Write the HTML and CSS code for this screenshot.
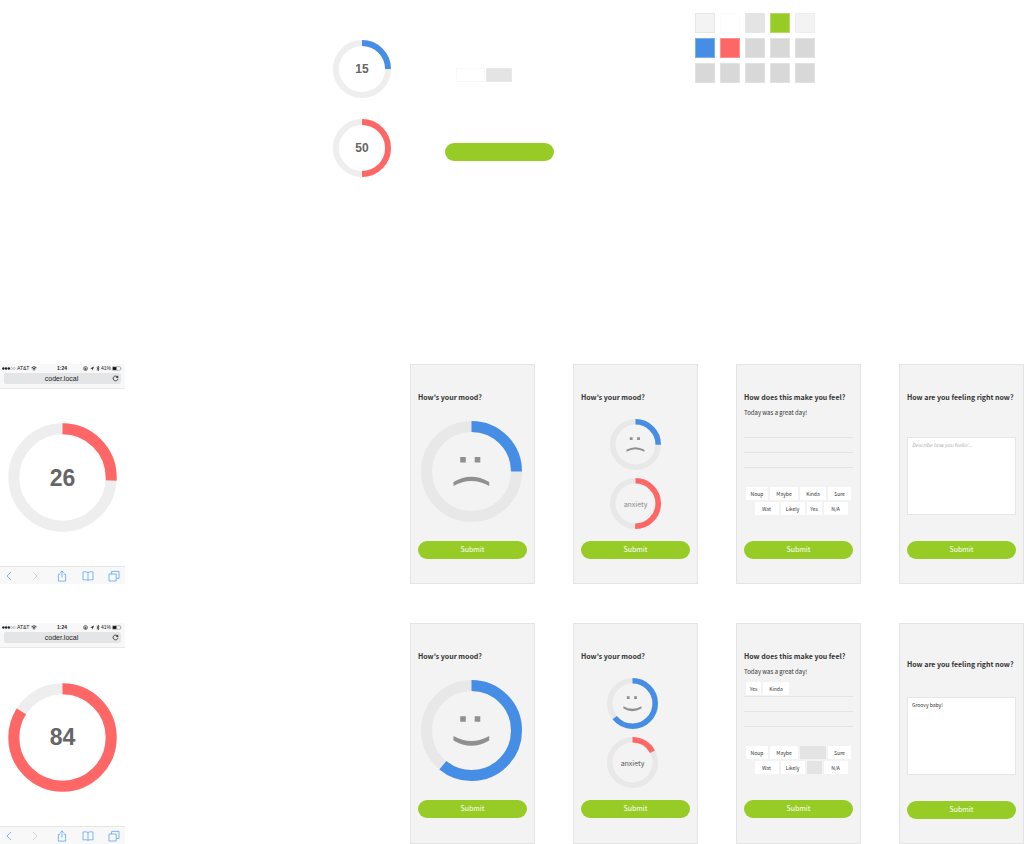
FILE: index.html
```
<!DOCTYPE html>
<html lang="en">
<head>
<meta charset="utf-8">
<title>Mood tracker components and screens</title>
<link rel="stylesheet" href="styles.css">
</head>
<body>
<svg class="defs" aria-hidden="true">
  <symbol id="face-sad" viewBox="0 0 101 101">
    <path d="M39.2 36h5.6v5.5h-5.6zM53.7 36h5.6v5.5h-5.6z"/>
    <path d="M32.5 61Q50.4 50.5 68.2 61V65Q50.4 55 32.5 65Z"/>
  </symbol>
  <symbol id="face-happy" viewBox="0 0 101 101">
    <path d="M39.2 36.3h5.6v5.5h-5.6zM53.7 36.3h5.6v5.5h-5.6z"/>
    <path d="M32.5 56Q50.4 66 68.2 56V60.5Q50.4 71 32.5 60.5Z"/>
  </symbol>
  <symbol id="signal" viewBox="0 0 14 4">
    <g fill="#222"><circle cx="1.4" cy="2" r="1.2"/><circle cx="4.1" cy="2" r="1.2"/><circle cx="6.8" cy="2" r="1.2"/></g>
    <g fill="none" stroke="#777" stroke-width=".4"><circle cx="9.5" cy="2" r="1"/><circle cx="12.2" cy="2" r="1"/></g>
  </symbol>
  <symbol id="wifi" viewBox="0 0 6 5">
    <path d="M.5 1.8Q3-.4 5.5 1.8M1.5 3Q3 1.8 4.5 3" fill="none" stroke="#222" stroke-width=".9"/><path d="M2.1 3.7Q3 3 3.9 3.7L3 4.8Z" fill="#222"/>
  </symbol>
  <symbol id="lock" viewBox="0 0 5 5">
    <circle cx="2.5" cy="2.5" r="2" fill="none" stroke="#333" stroke-width=".6"/><path d="M1.6 2.3h1.8v1.4H1.6z" fill="#222"/><path d="M2 2.4V1.9a.5.5 0 0 1 1 0v.5" fill="none" stroke="#222" stroke-width=".3"/>
  </symbol>
  <symbol id="arrow" viewBox="0 0 4 5"><path d="M4 .5 2.5 4.6 2.1 2.7.1 2.4Z" fill="#222"/></symbol>
  <symbol id="bluetooth" viewBox="0 0 4 5"><path d="M.7 1.3 3.2 3.6 2 4.7V.3L3.2 1.4.7 3.7" fill="none" stroke="#222" stroke-width=".7"/></symbol>
  <symbol id="battery" viewBox="0 0 10 5">
    <rect x=".3" y=".7" width="8.2" height="3.6" rx=".6" fill="none" stroke="#555" stroke-width=".4"/><path d="M.8 1.1h3.7v2.8H.8z" fill="#111"/><path d="M9 1.8q.8.7 0 1.4z" fill="#555"/>
  </symbol>
  <symbol id="reload" viewBox="0 0 7 7">
    <path d="M5.6 2.2A2.4 2.4 0 1 0 5.9 3.9" fill="none" stroke="#333" stroke-width=".9"/><path d="M6.2.6V3H3.8Z" fill="#333"/>
  </symbol>
  <symbol id="back" viewBox="0 0 12 12"><path d="M8 2 4 6l4 4"/></symbol>
  <symbol id="forward" viewBox="0 0 12 12"><path d="M4 2l4 4-4 4"/></symbol>
  <symbol id="share" viewBox="0 0 12 12"><path d="M4.3 4.3H2.4v6.8h7.2V4.3H7.7M6 7.5V.9M4.1 2.8 6 .9l1.9 1.9"/></symbol>
  <symbol id="book" viewBox="0 0 12 12"><path d="M6 2.6C4.8 1.6 2.8 1.6 1 2v8c1.8-.4 3.8-.4 5 .4 1.2-.8 3.2-.8 5-.4V2C9.2 1.6 7.2 1.6 6 2.6v7.8"/></symbol>
  <symbol id="tabs" viewBox="0 0 12 12"><path d="M1 4h7.2v7H1zM3.6 4V1.4H11v7H8.2"/></symbol>
</svg>

<main class="board">
  <section class="kit" aria-label="Components">
    <div class="kit-rings">
      <div class="ring ring-sm"><svg viewBox="0 0 59 59"><circle class="track" cx="29.5" cy="29.5" r="26.5"/><circle class="value blue" pathLength="100" stroke-dasharray="25 75" cx="29.5" cy="29.5" r="26.5"/></svg><span>15</span></div>
      <div class="ring ring-sm"><svg viewBox="0 0 59 59"><circle class="track" cx="29.5" cy="29.5" r="26.5"/><circle class="value red" pathLength="100" stroke-dasharray="50 50" cx="29.5" cy="29.5" r="26.5"/></svg><span>50</span></div>
    </div>
    <div class="kit-controls">
      <div class="kit-tags"><span class="blank"></span><span class="blank used"></span></div>
      <button class="submit" type="button" aria-label="Submit"></button>
    </div>
    <ul class="swatches" aria-label="Palette">
      <li></li><li class="s-white"></li><li class="s-mist"></li><li class="s-green"></li><li class="s-pale"></li>
      <li class="s-blue"></li><li class="s-red"></li><li class="s-gray"></li><li class="s-gray"></li><li class="s-gray"></li>
      <li class="s-gray"></li><li class="s-gray"></li><li class="s-gray"></li><li class="s-gray"></li><li class="s-gray"></li>
    </ul>
  </section>

  <section class="row">
    <article class="phone">
      <header class="browser">
        <div class="status"><div><svg class="w14"><use href="#signal"/></svg>AT&amp;T<svg class="w6 wifi"><use href="#wifi"/></svg></div><b>1:24</b><div class="right"><svg class="w5"><use href="#lock"/></svg><svg class="w4 arrow"><use href="#arrow"/></svg><svg class="w4"><use href="#bluetooth"/></svg>41%<svg class="w10"><use href="#battery"/></svg></div></div>
        <div class="address"><span>coder.local</span><button type="button" aria-label="Reload"><svg><use href="#reload"/></svg></button></div>
      </header>
      <div class="ring ring-lg"><svg viewBox="0 0 109 109"><circle class="track" cx="54.5" cy="54.5" r="48.7"/><circle class="value red" pathLength="100" stroke-dasharray="26 74" cx="54.5" cy="54.5" r="48.7"/></svg><span>26</span></div>
      <nav class="toolbar" aria-label="Browser">
        <button type="button" aria-label="Back"><svg><use href="#back"/></svg></button><button type="button" aria-label="Forward" disabled><svg><use href="#forward"/></svg></button><button type="button" aria-label="Share"><svg><use href="#share"/></svg></button><button type="button" aria-label="Bookmarks"><svg><use href="#book"/></svg></button><button type="button" aria-label="Tabs"><svg><use href="#tabs"/></svg></button>
      </nav>
    </article>
    <div class="forms">
      <form class="card">
        <h2>How's your mood?</h2>
        <div class="body mood">
          <div class="ring ring-mood"><svg viewBox="0 0 101 101"><circle class="track" cx="50.5" cy="50.5" r="45"/><circle class="value blue" pathLength="100" stroke-dasharray="25 75" cx="50.5" cy="50.5" r="45"/><use href="#face-sad"/></svg></div>
        </div>
        <button class="submit" type="button">Submit</button>
      </form>
      <form class="card">
        <h2>How's your mood?</h2>
        <div class="body pair">
          <div class="ring ring-pair"><svg viewBox="0 0 101 101"><circle class="track" cx="50.5" cy="50.5" r="45"/><circle class="value blue" pathLength="100" stroke-dasharray="25 75" cx="50.5" cy="50.5" r="45"/><use href="#face-sad"/></svg></div>
          <div class="ring ring-pair"><svg viewBox="0 0 101 101"><circle class="track" cx="50.5" cy="50.5" r="45"/><circle class="value red" pathLength="100" stroke-dasharray="50 50" cx="50.5" cy="50.5" r="45"/></svg><span class="muted">anxiety</span></div>
        </div>
        <button class="submit" type="button">Submit</button>
      </form>
      <form class="card">
        <h2>How does this make you feel?</h2>
        <div class="body words">
          <p>Today was a great day!</p>
          <div class="slot"></div><div class="slot"></div><div class="slot"></div>
          <div class="tags first"><button type="button" class="tag w-noup">Noup</button><button type="button" class="tag w-maybe">Maybe</button><button type="button" class="tag w-kinda">Kinda</button><button type="button" class="tag w-sure">Sure</button></div>
          <div class="tags second"><button type="button" class="tag w-wat">Wat</button><button type="button" class="tag w-wat">Likely</button><button type="button" class="tag w-yes">Yes</button><button type="button" class="tag w-wat">N/A</button></div>
        </div>
        <button class="submit" type="button">Submit</button>
      </form>
      <form class="card">
        <h2><label for="feeling-empty">How are you feeling right now?</label></h2>
        <div class="body note"><textarea id="feeling-empty" placeholder="Describe how you feelin'..."></textarea></div>
        <button class="submit" type="button">Submit</button>
      </form>
    </div>
  </section>

  <section class="row">
    <article class="phone">
      <header class="browser">
        <div class="status"><div><svg class="w14"><use href="#signal"/></svg>AT&amp;T<svg class="w6 wifi"><use href="#wifi"/></svg></div><b>1:24</b><div class="right"><svg class="w5"><use href="#lock"/></svg><svg class="w4 arrow"><use href="#arrow"/></svg><svg class="w4"><use href="#bluetooth"/></svg>41%<svg class="w10"><use href="#battery"/></svg></div></div>
        <div class="address"><span>coder.local</span><button type="button" aria-label="Reload"><svg><use href="#reload"/></svg></button></div>
      </header>
      <div class="ring ring-lg"><svg viewBox="0 0 109 109"><circle class="track" cx="54.5" cy="54.5" r="48.7"/><circle class="value red" pathLength="100" stroke-dasharray="84 16" cx="54.5" cy="54.5" r="48.7"/></svg><span>84</span></div>
      <nav class="toolbar" aria-label="Browser">
        <button type="button" aria-label="Back"><svg><use href="#back"/></svg></button><button type="button" aria-label="Forward" disabled><svg><use href="#forward"/></svg></button><button type="button" aria-label="Share"><svg><use href="#share"/></svg></button><button type="button" aria-label="Bookmarks"><svg><use href="#book"/></svg></button><button type="button" aria-label="Tabs"><svg><use href="#tabs"/></svg></button>
      </nav>
    </article>
    <div class="forms">
      <form class="card">
        <h2>How's your mood?</h2>
        <div class="body mood">
          <div class="ring ring-mood"><svg viewBox="0 0 101 101"><circle class="track" cx="50.5" cy="50.5" r="45"/><circle class="value blue" pathLength="100" stroke-dasharray="61 39" cx="50.5" cy="50.5" r="45"/><use href="#face-happy"/></svg></div>
        </div>
        <button class="submit" type="button">Submit</button>
      </form>
      <form class="card">
        <h2>How's your mood?</h2>
        <div class="body pair shifted">
          <div class="ring ring-pair"><svg viewBox="0 0 101 101"><circle class="track" cx="50.5" cy="50.5" r="45"/><circle class="value blue" pathLength="100" stroke-dasharray="64 36" cx="50.5" cy="50.5" r="45"/><use href="#face-happy"/></svg></div>
          <div class="ring ring-pair"><svg viewBox="0 0 101 101"><circle class="track" cx="50.5" cy="50.5" r="45"/><circle class="value red" pathLength="100" stroke-dasharray="17 83" cx="50.5" cy="50.5" r="45"/></svg><span>anxiety</span></div>
        </div>
        <button class="submit" type="button">Submit</button>
      </form>
      <form class="card">
        <h2>How does this make you feel?</h2>
        <div class="body words">
          <p>Today was a great day!</p>
          <div class="slot"><button type="button" class="tag w-yes">Yes</button><button type="button" class="tag w-kinda">Kinda</button></div><div class="slot"></div><div class="slot"></div>
          <div class="tags first"><button type="button" class="tag w-noup">Noup</button><button type="button" class="tag w-maybe">Maybe</button><span class="tag used w-kinda"></span><button type="button" class="tag w-sure">Sure</button></div>
          <div class="tags second"><button type="button" class="tag w-wat">Wat</button><button type="button" class="tag w-wat">Likely</button><span class="tag used w-yes"></span><button type="button" class="tag w-wat">N/A</button></div>
        </div>
        <button class="submit" type="button">Submit</button>
      </form>
      <form class="card lowered">
        <h2><label for="feeling-filled">How are you feeling right now?</label></h2>
        <div class="body note"><textarea id="feeling-filled">Groovy baby!</textarea></div>
        <button class="submit" type="button">Submit</button>
      </form>
    </div>
  </section>
</main>
</body>
</html>
```
FILE: styles.css
```
* { box-sizing: border-box; }

body {
  margin: 0;
  background: #fff;
  color: #333;
  font-family: "Noto Sans CJK SC", "Noto Sans", sans-serif;
}

button {
  margin: 0;
  padding: 0;
  border: 0;
  background: none;
  color: inherit;
  font: inherit;
}

svg { display: block; flex: none; }
.defs { position: absolute; width: 0; height: 0; }

.board {
  display: grid;
  grid-template-rows: 325px auto auto;
  row-gap: 39px;
}

/* Component kit */
.kit {
  display: flex;
  align-items: flex-start;
  padding: 13px 0 0 333px;
}
.kit-rings { display: grid; gap: 21px; padding-top: 27px; }
.kit-controls { width: 109px; margin: 55px 141px 0 54px; }
.kit-tags { display: flex; gap: 1px; margin: 0 0 61px 11px; }
.blank { width: 29px; height: 14px; border: 1px solid #f8f8f8; }
.blank.used { width: 26px; background: #e4e4e4; border-color: #e8e8e8; }

.swatches {
  display: grid;
  grid-template-columns: repeat(5, 20px);
  grid-auto-rows: 20px;
  gap: 5px;
  margin: 0;
  padding: 0;
  list-style: none;
}
.swatches li { border: 1px solid #e6e6e6; background: #f3f3f3; }
.swatches .s-white { background: #fff; border-color: #fbfbfb; }
.swatches .s-mist { background: #e4e4e4; }
.swatches .s-green { background: #97cc26; border-color: #b5da66; }
.swatches .s-pale { border-color: #eee; }
.swatches .s-blue { background: #468ee5; border-color: #7aaeec; }
.swatches .s-red { background: #ff6666; border-color: #ff9090; }
.swatches .s-gray { background: #d8d8d8; border-color: #e2e2e2; }

/* Progress rings */
.ring { display: grid; place-items: center; }
.ring > * { grid-area: 1 / 1; }
.ring svg { width: 100%; height: auto; fill: #909090; }
.ring circle { fill: none; stroke-width: 11px; }
.ring .track { stroke: #e8e8e8; }
.ring .value { transform: rotate(-90deg); transform-origin: center; }
.ring .blue { stroke: #468ee5; }
.ring .red { stroke: #ff6666; }
.ring-sm { width: 58px; }
.ring-lg { width: 109px; margin: auto; }
.ring-sm .track, .ring-lg .track { stroke: #eee; }
.ring-sm circle { stroke-width: 6px; }
.ring-sm span, .ring-lg span { color: #666; font-family: "Liberation Sans", sans-serif; font-weight: 700; }
.ring-sm span { font-size: 12px; line-height: 16px; }
.ring-lg span { font-size: 23px; line-height: 28px; }
.ring-mood { width: 101px; }
.ring-pair { width: 51px; }
.ring-pair span { font-size: 7px; line-height: 10px; color: #555; }
.ring-pair .muted { color: #888; }

/* Screens */
.row { display: flex; justify-content: space-between; }
.phone { display: flex; flex-direction: column; width: 125px; font-family: "Liberation Sans", sans-serif; color: #222; }
.forms { display: flex; gap: 38px; }

.browser { padding: 1px 3px 4px 2px; background: #f8f8f8; border-bottom: 1px solid #e8e8e8; }
.status { display: grid; grid-template-columns: 1fr auto 1fr; align-items: center; height: 7px; font-size: 5px; line-height: 7px; }
.status div { display: flex; align-items: center; gap: 1px; }
.status .right { justify-content: flex-end; }
.status .arrow { margin: 0 1px; }
.status .wifi { margin-left: 1px; }
.status svg { height: 5px; }
.w4 { width: 4px; }
.w5 { width: 5px; }
.w6 { width: 6px; }
.w10 { width: 10px; }
.w14 { width: 14px; }
.address { display: grid; grid-template-columns: 1fr auto 1fr; align-items: center; height: 11px; margin: 1px 1px 0 2px; padding-right: 2px; border-radius: 2px; background: #e4e5e7; font-size: 7px; line-height: 9px; }
.address span { grid-column: 2; }
.address button { justify-self: end; }
.address svg { width: 7px; height: 7px; }
.toolbar { display: flex; justify-content: space-between; padding: 3px 5px 2px 3px; background: #f8f8f8; border-top: 1px solid #e6e6e6; color: #5ba5f2; }
.toolbar svg { width: 12px; height: 12px; fill: none; stroke: currentColor; stroke-width: .8; }
.toolbar button:disabled { color: #ccc; }

/* Form cards */
.card {
  display: flex;
  flex-direction: column;
  width: 125px;
  padding: 27px 7px 24px;
  border: 1px solid #e4e4e4;
  background: #f3f3f3;
}
.card h2 { margin: 0 0 1px; font-size: 7px; line-height: 10px; font-weight: 700; white-space: nowrap; }
.body { height: 138px; }
.mood { display: grid; justify-content: center; align-content: start; padding: 18px 2px 0 0; }
.pair { display: grid; justify-content: center; align-content: start; gap: 8px; padding-top: 16px; }
.pair.shifted { padding-right: 6px; }

.submit {
  display: block;
  width: 100%;
  height: 18px;
  padding-bottom: 2px;
  border-radius: 9px;
  background: #97cc26;
  color: #fff;
  font-size: 7px;
  line-height: 16px;
}

.words { padding-top: 5px; }
.words p { margin: 0 0 5px; font-size: 6px; line-height: 10px; }
.slot { display: flex; align-items: flex-start; gap: 2px; height: 15px; padding-left: 2px; border-bottom: 1px solid #e4e4e4; }
.tags { display: flex; justify-content: center; gap: 2px; margin-bottom: 2px; }
.tags.first { margin-top: 19px; }
.tags.second { padding-left: 5px; }
.tag { height: 13px; background: #fff; font-size: 5px; line-height: 13px; text-align: center; }
.tag.used { background: #e4e4e4; }
.w-noup { width: 22px; }
.w-maybe { width: 28px; }
.w-kinda { width: 26px; }
.w-sure { width: 23px; }
.w-wat { width: 24px; }
.w-yes { width: 15px; }

.note { padding-top: 34px; }
.note textarea {
  display: block;
  width: 100%;
  height: 78px;
  margin: 0;
  padding: 3px 4px;
  border: 1px solid #e6e6e6;
  background: #fff;
  color: #333;
  font-family: inherit;
  font-size: 5px;
  line-height: 8px;
  resize: none;
}
.note textarea::placeholder { color: #aaa; font-style: italic; opacity: 1; }
.lowered { padding-top: 35px; }
.lowered .body { height: 131px; }
.lowered .note { padding-top: 27px; }
```
